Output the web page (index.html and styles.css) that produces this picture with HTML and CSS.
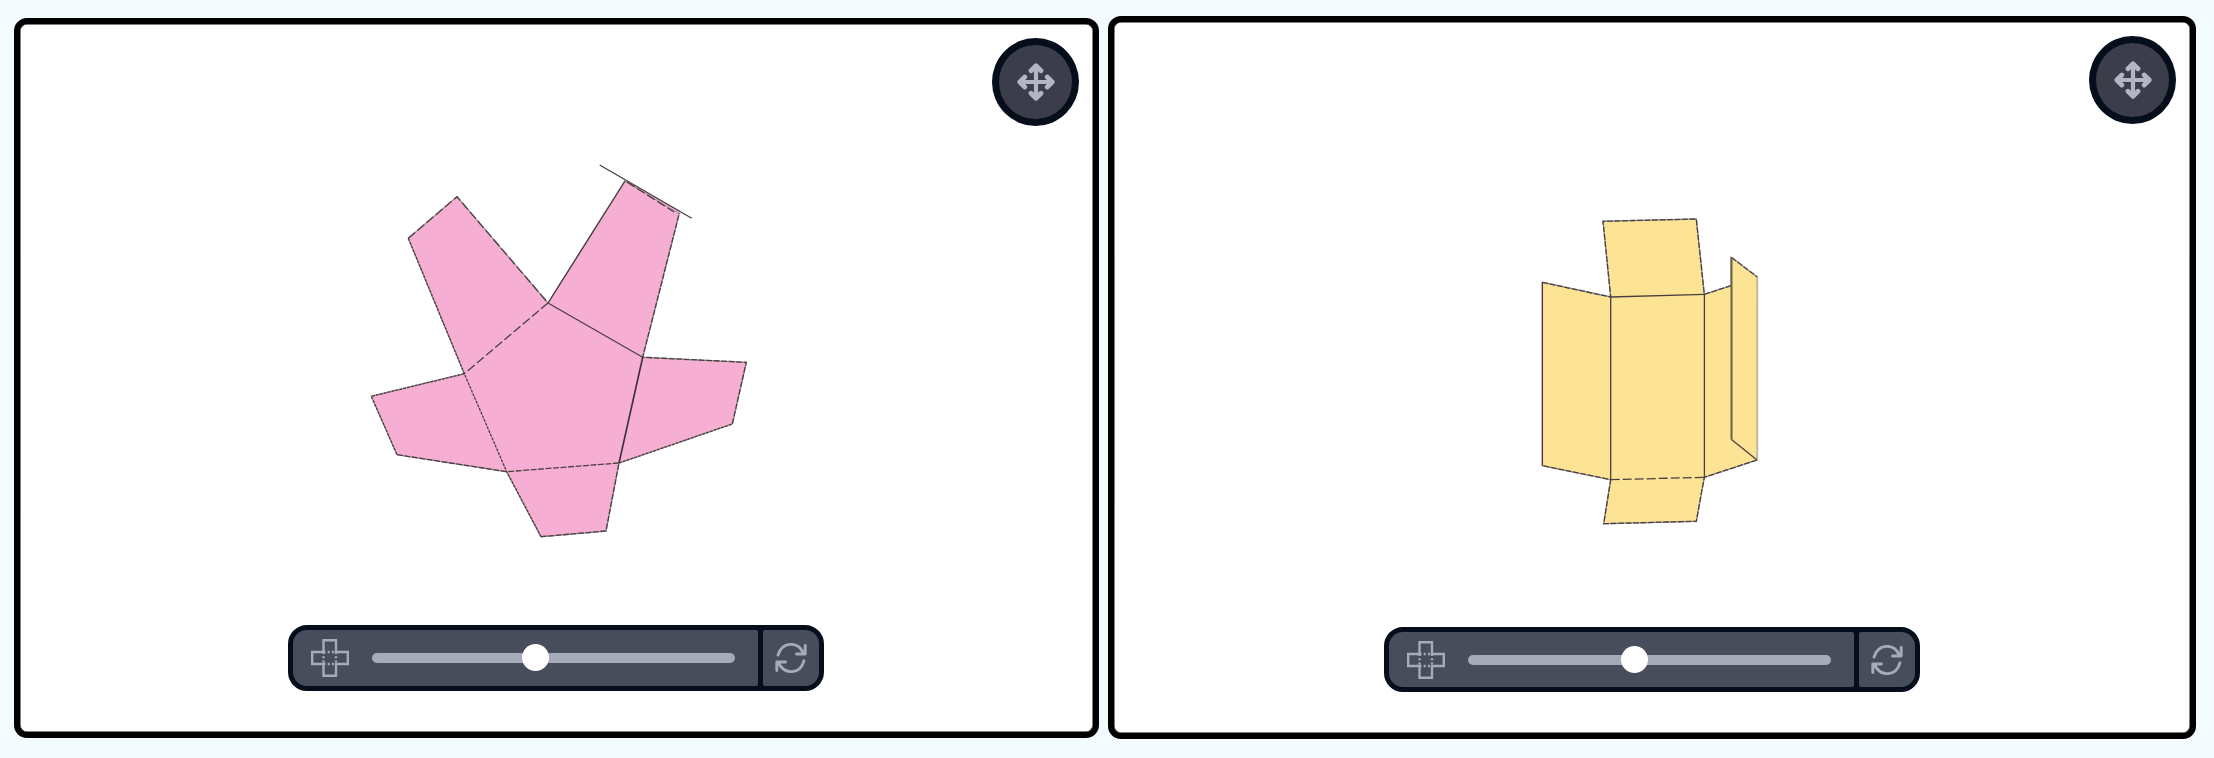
FILE: index.html
```
<!DOCTYPE html>
<html lang="en">
<head>
<meta charset="utf-8">
<title>Polyhedron nets</title>
<link rel="stylesheet" href="styles.css">
</head>
<body>
<svg class="defs" aria-hidden="true">
  <symbol id="move" viewBox="0 0 38 38">
    <path class="thick" d="M19 3V35M3 19H35"/>
    <path class="heads" d="M14 7.8L19 2.8L24 7.8M14 30.2L19 35.2L24 30.2M7.8 14L2.8 19L7.8 24M30.2 14L35.2 19L30.2 24"/>
  </symbol>
  <symbol id="net" viewBox="0 0 38 38">
    <path class="thin" d="M12.5 1.2H25V13H36.8V25H25V36.8H12.5V25H1.2V13H12.5Z"/>
    <path class="dots" d="M12.5 13H25M12.5 25H25M12.5 13V25M25 13V25"/>
  </symbol>
  <symbol id="turn" viewBox="0 0 32 30">
    <path class="arc" d="M3 12.2C7 -1.5 23 -2.3 28.6 10.6M30.2 2.5V11H21.5M29 17.8C25 31.5 9 32.3 3.4 19.4M1.8 27.5V19H10.5"/>
  </symbol>
</svg>
<main class="board">
  <section class="panel first">
    <svg class="canvas" viewBox="21 25 1071 706">
      <g class="pink">
        <path class="face" d="M548 303L457 196.7L408.3 238.3L464.3 373.7L371.3 396.3L397 454.7L506.7 471.7L541 536.7L606 531L619 463L732.3 424L746.3 362.3L642.7 357.3L679.3 213.3L625 181Z"/>
        <path d="M604 168L625 180L681 214L679 210Z"/>
      </g>
      <g class="edge">
        <path d="M548 303L625 181M548 303L642.7 357.3M599.7 165L691.7 218.3"/>
        <path class="long" d="M408.3 238.3L457 196.7L548 303L464.3 373.7M627 182L674 212"/>
        <path class="fine" d="M408.3 238.3L464.3 373.7L506.7 471.7L541 536.7M464.3 373.7L371.3 396.3L397 454.7M619 463L732.3 424"/>
        <path class="mid" d="M397 454.7L506.7 471.7L619 463L606 531L541 536.7M732.3 424L746.3 362.3L642.7 357.3L679.3 213.3"/>
        <path class="fold" d="M642.7 357.3L619 463"/>
      </g>
    </svg>
    <button class="move" aria-label="Move"><svg><use href="#move"/></svg></button>
    <div class="toolbar">
      <div class="fold-control"><svg class="net"><use href="#net"/></svg><div class="track"><span class="knob"></span></div></div>
      <button class="reset" aria-label="Reset"><svg><use href="#turn"/></svg></button>
    </div>
  </section>
  <section class="panel second">
    <svg class="canvas" viewBox="1114 23 1075 709">
      <g class="yellow">
        <path class="face" d="M1542.3 282.3L1610.7 297L1603 221.3L1696.3 219L1704.3 294.3L1731 285.7V257.3L1757.3 277V460L1704.3 477.3L1696.3 521.3L1603.7 523.7L1610.7 479.7L1542.3 465.7Z"/>
      </g>
      <g class="edge">
        <path d="M1542.4 282.3V465.7M1610.7 297V479.7M1704.4 294.3V477.3"/>
        <path d="M1610.7 297L1704.3 294.3"/>
        <path class="long" d="M1610.7 479.7L1704.3 477.3"/>
        <path class="mid" d="M1542.3 282.3L1610.7 297L1603 221.3L1696.3 219L1704.3 294.3L1731 285.7M1731.5 257.3L1757.3 277M1757 460L1704.3 477.3L1696.3 521.3L1603.7 523.7L1610.7 479.7L1542.3 465.7"/>
        <path class="flap" d="M1731.5 257.3V439.5"/>
        <path d="M1731.5 439.5L1757 460"/>
        <path class="pale" d="M1757.5 277V460"/>
      </g>
    </svg>
    <button class="move" aria-label="Move"><svg><use href="#move"/></svg></button>
    <div class="toolbar">
      <div class="fold-control"><svg class="net"><use href="#net"/></svg><div class="track"><span class="knob"></span></div></div>
      <button class="reset" aria-label="Reset"><svg><use href="#turn"/></svg></button>
    </div>
  </section>
</main>
</body>
</html>
```
FILE: styles.css
```
* { box-sizing: border-box; }
body { margin: 0; background: #f3fbff; font-family: "Liberation Sans", sans-serif; }
svg { display: block; fill: none; }
button { padding: 0; font: inherit; display: grid; place-items: center; }
.defs { position: absolute; width: 0; height: 0; }
.board { display: flex; align-items: flex-start; gap: 9px; height: 758px; padding: 16px 18px 0 14px; overflow: hidden; }
.panel { position: relative; border: 6px solid #000; border-radius: 13px; background: #fff; box-shadow: inset 0 0 0 0.5px #000; }
.first { width: 1085px; height: 720px; margin-top: 2px; padding: 1px; }
.second { width: 1088px; height: 723px; padding: 1px 1px 1px 0; }
.canvas { width: 100%; height: 100%; }
.pink { fill: #f6afd2; }
.yellow { fill: #fde394; }
.face { stroke: #8c8487; stroke-width: 1.4; stroke-opacity: 0.75; }
.edge { stroke: #4a3f42; stroke-width: 1.3; }
.long { stroke-dasharray: 9 3; }
.fine { stroke-dasharray: 3 1; }
.mid { stroke-dasharray: 6 1.5; }
.fold { stroke: #3c3036; stroke-width: 1.6; }
.flap { stroke: #69624c; stroke-width: 2; }
.pale { stroke: #b9b5aa; }

.move { position: absolute; top: 14px; right: 14px; width: 87px; height: 88px; border: 7px solid #070e1b; border-radius: 50%; background: #3b3e4a; }
.move svg { width: 38px; height: 38px; }
.thick { stroke: #b2b6c4; stroke-width: 4.2; stroke-linecap: round; }
.heads { stroke: #b2b6c4; stroke-width: 4.8; stroke-linecap: round; stroke-linejoin: round; }

.toolbar { position: absolute; left: 268px; top: 601px; display: flex; gap: 5px; width: 536px; height: 66px; border: 5px solid #070e1b; border-radius: 19px; background: #070e1b; }
.second .toolbar { left: 270px; top: 605px; height: 65px; }
.fold-control { flex: 1; display: flex; align-items: center; gap: 23px; padding: 0 23px 0 18px; border-radius: 14px 2px 2px 14px; background: #484d5c; }
.net { flex: none; width: 38px; height: 38px; }
.thin { stroke: #a6abba; stroke-width: 2.4; }
.dots { stroke: #a6abba; stroke-width: 2.4; stroke-dasharray: 2 2.2; }
.track { position: relative; flex: 1; height: 10px; border-radius: 5px; background: #a6abba; }
.knob { position: absolute; left: 150px; top: -9px; width: 27px; height: 27px; border-radius: 50%; background: #fff; }
.second .knob { left: 153px; }
.reset { width: 56px; border: 0; border-radius: 2px 14px 14px 2px; background: #484d5c; }
.reset svg { width: 32px; height: 30px; }
.arc { stroke: #a6abba; stroke-width: 2.9; stroke-linecap: round; stroke-linejoin: round; }
```
